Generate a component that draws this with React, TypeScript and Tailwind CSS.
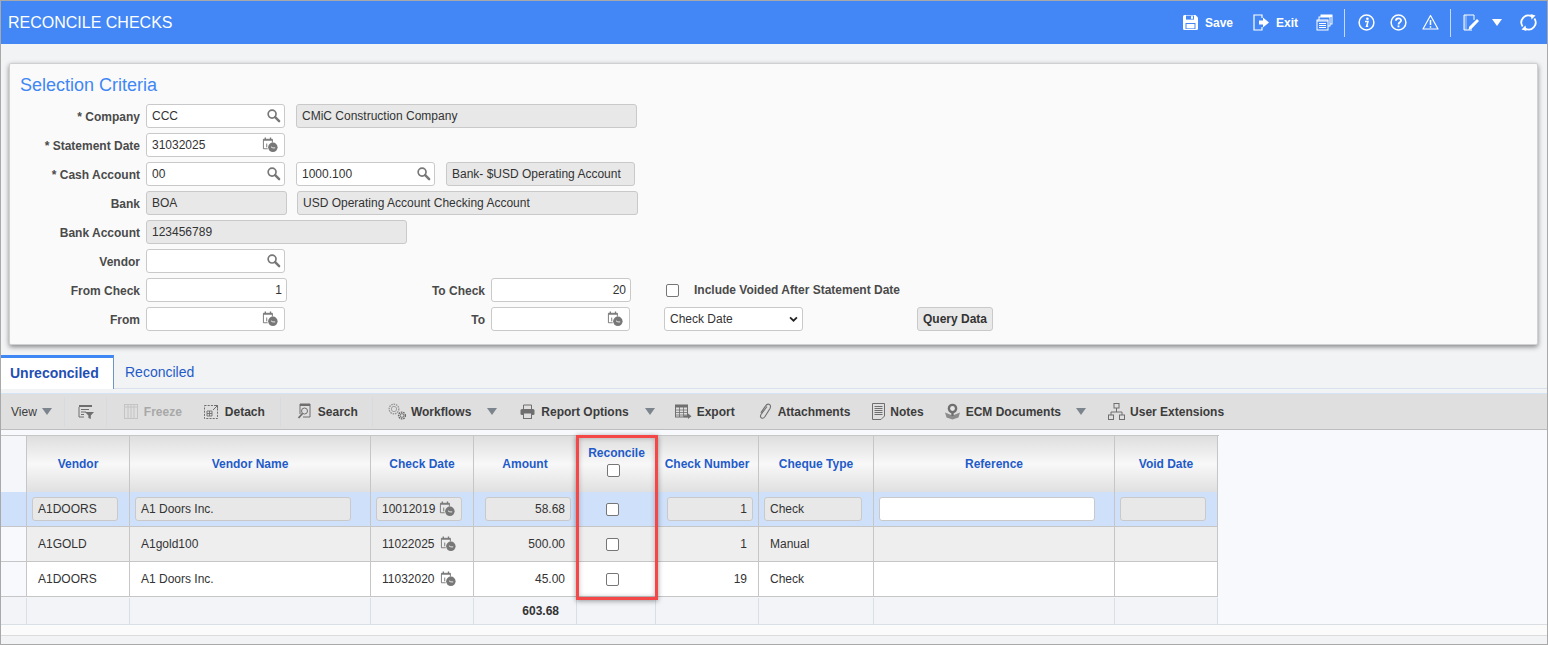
import React from "react";

const font = { fontFamily: '"Liberation Sans", Arial, sans-serif' };

const Search = () => (
  <svg width="15" height="15" viewBox="0 0 16 16" fill="none" className="shrink-0 -translate-y-[1px]">
    <circle cx="6.5" cy="6.5" r="4.2" stroke="#777" strokeWidth="1.8" fill="#fff" />
    <path d="M9.8 9.8 L14 14" stroke="#777" strokeWidth="2.6" strokeLinecap="round" />
  </svg>
);

const Cal = () => (
  <svg width="17" height="17" viewBox="0 0 18 18" fill="none" className="shrink-0 -translate-y-[1px]">
    <path d="M1.5 3.5H11V7M1.5 3.5V13.5H6" stroke="#777" strokeWidth="1" />
    <path d="M1.5 3.5H11V5H1.5Z" fill="#777" />
    <path d="M3.5 1.5V4M9 1.5V4" stroke="#777" strokeWidth="1.4" />
    <path d="M5 8V12" stroke="#777" strokeWidth="1" />
    <circle cx="11.5" cy="12" r="5" fill="#777" />
    <path d="M9.5 11.5L11.5 12.6H14" stroke="#eee" strokeWidth="1" />
  </svg>
);

const Field = ({ w, v, ro, icon, right, cls = "" }: { w: string; v?: string; ro?: boolean; icon?: React.ReactNode; right?: boolean; cls?: string }) => (
  <div className={`h-[24px] ${w} ${cls} shrink-0 rounded-[3px] border border-[#c9c9c9] flex items-center pl-[5px] pr-[3px] text-[12px] text-[#333] ${ro ? "bg-[#e8e8e8]" : "bg-white"} ${right ? "justify-end" : "justify-between"}`}>
    <span className={right ? "pr-[1px]" : ""}>{v}</span>
    {icon}
  </div>
);

const Label = ({ t, w = "w-[141px]" }: { t: string; w?: string }) => (
  <div className={`${w} shrink-0 text-right text-[12px] font-bold text-[#4a4a4a] pt-[1px]`}>{t}</div>
);

const Row = ({ children }: { children: React.ReactNode }) => (
  <div className="flex items-center h-[24px]">{children}</div>
);

const W = "#ffffff";
const SaveI = () => (
  <svg width="17" height="17" viewBox="0 0 17 17" fill="none">
    <path d="M1 2.5 Q1 1 2.5 1 H13.5 L16 3.5 V14.5 Q16 16 14.5 16 H2.5 Q1 16 1 14.5Z" fill={W} />
    <rect x="4" y="1.6" width="8" height="4" fill="#4287f5" />
    <rect x="9" y="2.2" width="2" height="2.6" fill={W} />
    <rect x="3.5" y="9" width="10" height="6" fill="#4287f5" />
    <rect x="4.5" y="10" width="8" height="4.4" fill={W} />
  </svg>
);
const ExitI = () => (
  <svg width="17" height="17" viewBox="0 0 17 17" fill="none">
    <path d="M9 4V1H1V16H9V13" stroke={W} strokeWidth="1.2" />
    <path d="M6 6.5H10V3.5L16 8.5L10 13.5V10.5H6Z" fill={W} />
  </svg>
);
const CopyI = () => (
  <svg width="17" height="17" viewBox="0 0 17 17" fill="none">
    <rect x="5" y="1" width="11" height="9" fill="none" stroke={W} />
    <rect x="5" y="1" width="11" height="2" fill={W} />
    <rect x="3" y="3" width="11" height="9" fill="#4287f5" stroke={W} />
    <rect x="1" y="6" width="11" height="10" fill="#4287f5" stroke={W} />
    <path d="M1 7H12M3 9.5H10M3 11.5H10M3 13.5H10" stroke={W} />
  </svg>
);
const InfoI = () => (
  <svg width="17" height="17" viewBox="0 0 17 17" fill="none">
    <circle cx="8.5" cy="8.5" r="7.4" stroke={W} strokeWidth="1.5" />
    <circle cx="9.4" cy="4.8" r="1.3" fill={W} />
    <path d="M7 7.4H10L8.6 12.2H10.2" stroke={W} strokeWidth="1.5" />
  </svg>
);
const HelpI = () => (
  <svg width="17" height="17" viewBox="0 0 17 17" fill="none">
    <circle cx="8.5" cy="8.5" r="7.4" stroke={W} strokeWidth="1.5" />
    <path d="M5.9 6.7C5.9 3.6 11.1 3.6 11.1 6.5C11.1 8.3 8.5 8.2 8.5 10.4" stroke={W} strokeWidth="1.7" />
    <path d="M8.5 11.4V13.3" stroke={W} strokeWidth="1.8" />
  </svg>
);
const WarnI = () => (
  <svg width="17" height="17" viewBox="0 0 17 17" fill="none">
    <path d="M8.5 1.5L16 15H1Z" stroke={W} strokeWidth="1.2" strokeLinejoin="round" />
    <path d="M8.5 6V11M8.5 12.2V13.8" stroke={W} strokeWidth="1.5" />
  </svg>
);
const EditI = () => (
  <svg width="17" height="17" viewBox="0 0 17 17" fill="none">
    <path d="M11 6V1H1V16H9" stroke={W} strokeWidth="1" />
    <path d="M1 1H4V16H1" fill="#ffffff" fillOpacity="0.3" />
    <path d="M5.5 16L6.2 12.8L14 5L16 7L8.4 15Z" fill={W} />
  </svg>
);
const RefreshI = () => (
  <svg width="17" height="17" viewBox="0 0 17 17" fill="none">
    <path d="M11.5 2.2A7 7 0 0 0 2.6 12.4" stroke={W} strokeWidth="1.8" />
    <path d="M5.5 14.8A7 7 0 0 0 14.4 4.6" stroke={W} strokeWidth="1.8" />
    <path d="M10.5 0L15.5 1.5L11.5 5.5Z" fill={W} />
    <path d="M6.5 17L1.5 15.5L5.5 11.5Z" fill={W} />
  </svg>
);

const G = "#6f6f6f";
const FilterI = () => (
  <svg width="17" height="16" viewBox="0 0 17 16" fill="none">
    <rect x="1" y="1" width="13" height="2" fill={G} />
    <path d="M1 3V13H6M3 5.5H11M3 8H8M3 10.5H6" stroke={G} />
    <path d="M7 8H16L12.8 11.5V15L10.4 14V11.5Z" fill={G} />
  </svg>
);
const FreezeI = () => (
  <svg width="14" height="15" viewBox="0 0 14 15" fill="none" stroke="#c4c4c4">
    <rect x="0.5" y="0.5" width="13" height="14" />
    <path d="M4 1V14M7 1V14M10 1V14M1 3H13" />
  </svg>
);
const DetachI = () => (
  <svg width="15" height="15" viewBox="0 0 15 15" fill="none">
    <rect x="0.5" y="1.5" width="13" height="13" stroke={G} strokeDasharray="2 1.2" />
    <path d="M3 7H8V12H3ZM3 9.5H8M5.5 7V12" stroke={G} strokeWidth="0.9" />
    <path d="M9 6L13 2M10.5 1.5H13.5V4.5" stroke={G} />
  </svg>
);
const SearchDocI = () => (
  <svg width="15" height="17" viewBox="0 0 15 17" fill="none">
    <path d="M3 11V1H13V14H6" stroke={G} />
    <path d="M3 1H13V3H3Z" fill={G} />
    <circle cx="7.5" cy="8" r="3" stroke={G} />
    <path d="M5.5 10.5L1.5 15" stroke={G} strokeWidth="1.8" />
  </svg>
);
const Gear = ({ x, y, r, c }: { x: number; y: number; r: number; c: string }) => (
  <g>
    <circle cx={x} cy={y} r={r} stroke={c} strokeWidth="1.4" strokeDasharray="1.6 0.8" fill="none" />
    <circle cx={x} cy={y} r={r * 0.55} stroke={c} strokeWidth="0.9" fill="none" />
  </g>
);
const WorkflowI = () => (
  <svg width="19" height="17" viewBox="0 0 19 17" fill="none">
    <Gear x={6} y={6} r={4.8} c="#9a9a9a" />
    <Gear x={14} y={12.5} r={3.4} c="#6a6a6a" />
  </svg>
);
const PrintI = () => (
  <svg width="15" height="15" viewBox="0 0 15 15" fill="none">
    <path d="M3.5 5V1H11.5V5" stroke={G} />
    <rect x="0.5" y="5" width="14" height="6" rx="1.5" fill={G} />
    <rect x="3.5" y="9" width="8" height="5.5" fill="#dfdfdf" stroke={G} />
  </svg>
);
const ExportI = () => (
  <svg width="17" height="15" viewBox="0 0 17 15" fill="none">
    <rect x="0.5" y="1" width="12" height="12" stroke={G} />
    <rect x="0.5" y="1" width="12" height="2.5" fill={G} />
    <path d="M0.5 6H12.5M0.5 8.5H12.5M0.5 11H12.5M4.5 3V13M8.5 3V13" stroke={G} strokeWidth="0.8" />
    <path d="M9 11.5H13V9.5L16.5 12.3L13 15V13.2H9Z" fill={G} />
  </svg>
);
const ClipI = () => (
  <svg width="14" height="17" viewBox="0 0 14 17" fill="none">
    <path d="M9 3.5L3 11.5C2 13 2.5 14.5 3.5 15C5 15.8 6 15 7 13.5L12 5.5C13 3.5 12.5 2 11 1.3C9.5 0.7 8.5 1.5 7.5 3L2.8 9.8" stroke={G} strokeWidth="1.1" />
  </svg>
);
const NotesI = () => (
  <svg width="13" height="17" viewBox="0 0 13 17" fill="none">
    <path d="M0.5 0.5H12.5V13L9 16.5H0.5Z" stroke={G} />
    <path d="M2.5 3.5H10.5M2.5 5.5H10.5M2.5 7.5H10.5M2.5 9.5H10.5M2.5 11.5H10.5" stroke={G} />
  </svg>
);
const EcmI = () => (
  <svg width="17" height="17" viewBox="0 0 17 17" fill="none">
    <path d="M1 9.5L8.5 12.5L16 9.5L14.5 14.5L8.5 16.5L2.5 14.5Z" fill="#8c8c8c" />
    <circle cx="8.5" cy="5.5" r="4.8" fill={G} />
    <circle cx="8.5" cy="5.5" r="2.4" fill="#e6e6e6" />
    <path d="M7.3 10H9.7V13H7.3Z" fill={G} />
  </svg>
);
const TreeI = () => (
  <svg width="17" height="17" viewBox="0 0 17 17" fill="none" stroke={G}>
    <rect x="6" y="0.5" width="5" height="4.5" />
    <rect x="0.5" y="12" width="5" height="4.5" />
    <rect x="11.5" y="12" width="5" height="4.5" />
    <path d="M8.5 5V9M3 12V9H14V12" />
  </svg>
);

const Caret = ({ cls = "" }: { cls?: string }) => (
  <span className={`inline-block w-0 h-0 border-l-[5px] border-r-[5px] border-t-[7px] border-l-transparent border-r-transparent border-t-[#7c858d] ${cls}`} />
);

const Sep = ({ cls }: { cls: string }) => <div className={`w-px h-[30px] bg-[#d5dbe0] ${cls}`} />;

const Tool = ({ icon, t, cls, gap = "gap-[6px]", off }: { icon: React.ReactNode; t: string; cls: string; gap?: string; off?: boolean }) => (
  <div className={`flex items-center ${gap} ${cls} text-[12px] font-bold ${off ? "text-[#a8a8a8]" : "text-[#3c3c3c]"}`}>
    {icon}
    <span>{t}</span>
  </div>
);

const cols = "grid-cols-[26px_103px_241px_103px_103px_79px_103px_115px_241px_103px]";
const HCell = ({ t, children }: { t?: string; children?: React.ReactNode }) => (
  <div className="h-[56px] border-r border-[#c6c6c6] bg-gradient-to-b from-[#dedede] via-[#f8f8f8] to-[#e0e0e0] flex flex-col items-center justify-center text-[12px] font-bold text-[#1f5bc9]">
    {t}
    {children}
  </div>
);

const Box = ({ cls = "" }: { cls?: string }) => (
  <input type="checkbox" readOnly className={`w-[13px] h-[13px] m-0 appearance-none rounded-[2px] border border-[#767676] bg-white ${cls}`} />
);

type CellProps = { children?: React.ReactNode; bg: string; right?: boolean; cls?: string };
const Cell = ({ children, bg, right, cls = "" }: CellProps) => (
  <div className={`h-[35px] border-r border-b border-[#c6c6c6] ${bg} flex items-center ${right ? "justify-end" : ""} text-[12px] text-[#333] ${cls}`}>
    {children}
  </div>
);

const InCell = ({ w, v, right, white, ml = "ml-[5px]" }: { w: string; v?: string; right?: boolean; white?: boolean; ml?: string }) => (
  <div className={`${w} h-[24px] ${ml} rounded-[3px] border border-[#c9c9c9] flex items-center px-[5px] ${white ? "bg-white" : "bg-[#e8e8e8]"} ${right ? "justify-end" : ""}`}>{v}</div>
);

const Foot = ({ children, right }: { children?: React.ReactNode; right?: boolean }) => (
  <div className={`h-[26px] border-r border-[#d8dfe6] bg-[#f2f4f8] flex items-center ${right ? "justify-end pr-[17px]" : ""} text-[12px] font-bold text-[#333]`}>{children}</div>
);

const rows = [
  { bg: "bg-[#cfe0fb]", v: "A1DOORS", n: "A1 Doors Inc.", d: "10012019", a: "58.68", c: "1", t: "Check", edit: true },
  { bg: "bg-[#eeeeee]", v: "A1GOLD", n: "A1gold100", d: "11022025", a: "500.00", c: "1", t: "Manual" },
  { bg: "bg-white", v: "A1DOORS", n: "A1 Doors Inc.", d: "11032020", a: "45.00", c: "19", t: "Check" },
];

export default function App() {
  return (
    <div style={font} className="relative w-[1548px] h-[645px] overflow-hidden bg-[#f2f3f5] border border-[#a9a9a9]">
      {/* Title bar */}
      <div className="h-[43px] bg-[#4287f5] flex items-center text-white">
        <div className="ml-[7px] text-[16px]">RECONCILE CHECKS</div>
        <div className="ml-auto flex items-center text-[12px] font-bold">
          <div className="flex items-center gap-[6px]"><SaveI /><span>Save</span></div>
          <div className="flex items-center gap-[6px] ml-[20px]"><ExitI /><span>Exit</span></div>
          <div className="ml-[18px]"><CopyI /></div>
          <div className="w-px h-[28px] bg-[#c5d9f8] ml-[11px]" />
          <div className="ml-[13px]"><InfoI /></div>
          <div className="ml-[15px]"><HelpI /></div>
          <div className="ml-[15px]"><WarnI /></div>
          <div className="w-px h-[28px] bg-[#c5d9f8] ml-[11px]" />
          <div className="ml-[12px]"><EditI /></div>
          <span className="inline-block ml-[12px] w-0 h-0 border-l-[5px] border-r-[5px] border-t-[7px] border-l-transparent border-r-transparent border-t-white" />
          <div className="ml-[18px] mr-[10px]"><RefreshI /></div>
        </div>
      </div>

      {/* Selection panel */}
      <div className="mt-[19px] ml-[8px] w-[1529px] h-[282px] bg-[#fafafa] border border-[#d0d0d0] rounded-[2px] shadow-[0_2px_5px_rgba(0,0,0,0.45)] pt-[11px]">
        <div className="ml-[10px] text-[18px] leading-[21px] text-[#3f87f5]">Selection Criteria</div>
        <div className="mt-[8px] flex flex-col gap-[5px] text-[12px]">
          <Row>
            <Label t="* Company" w="w-[130px]" /><div className="w-[6px]" />
            <Field w="w-[139px]" v="CCC" icon={<Search />} />
            <Field w="w-[341px]" cls="ml-[11px]" v="CMiC Construction Company" ro />
          </Row>
          <Row>
            <Label t="* Statement Date" w="w-[130px]" /><div className="w-[6px]" />
            <Field w="w-[139px]" v="31032025" icon={<span className="pr-[2px] flex"><Cal /></span>} />
          </Row>
          <Row>
            <Label t="* Cash Account" w="w-[130px]" /><div className="w-[6px]" />
            <Field w="w-[139px]" v="00" icon={<Search />} />
            <Field w="w-[139px]" cls="ml-[11px]" v="1000.100" icon={<Search />} />
            <Field w="w-[189px]" cls="ml-[11px]" v="Bank- $USD Operating Account" ro />
          </Row>
          <Row>
            <Label t="Bank" w="w-[130px]" /><div className="w-[6px]" />
            <Field w="w-[141px]" v="BOA" ro />
            <Field w="w-[341px]" cls="ml-[10px]" v="USD Operating Account Checking Account" ro />
          </Row>
          <Row>
            <Label t="Bank Account" w="w-[130px]" /><div className="w-[6px]" />
            <Field w="w-[261px]" v="123456789" ro />
          </Row>
          <Row>
            <Label t="Vendor" w="w-[130px]" /><div className="w-[6px]" />
            <Field w="w-[139px]" icon={<Search />} />
          </Row>
          <Row>
            <Label t="From Check" w="w-[130px]" /><div className="w-[6px]" />
            <Field w="w-[141px]" v="1" right />
            <Label t="To Check" w="w-[198px]" /><div className="w-[6px]" />
            <Field w="w-[140px]" v="20" right />
            <Box cls="ml-[35px]" />
            <span className="ml-[15px] font-bold text-[#4a4a4a]">Include Voided After Statement Date</span>
          </Row>
          <Row>
            <Label t="From" w="w-[130px]" /><div className="w-[6px]" />
            <Field w="w-[139px]" icon={<span className="pr-[2px] flex"><Cal /></span>} />
            <Label t="To" w="w-[200px]" /><div className="w-[6px]" />
            <Field w="w-[139px]" icon={<span className="pr-[2px] flex"><Cal /></span>} />
            <div className="ml-[34px] w-[139px] h-[24px] rounded-[3px] border border-[#c9c9c9] bg-white flex items-center justify-between pl-[5px] pr-[4px] text-[#333]">
              <span>Check Date</span>
              <svg width="9" height="6" viewBox="0 0 10 7" fill="none"><path d="M1 1.5L5 5.5L9 1.5" stroke="#222" strokeWidth="2" /></svg>
            </div>
            <div className="ml-[114px] w-[76px] h-[24px] rounded-[3px] border border-[#c9c9c9] bg-[#e9e9e9] flex items-center justify-center font-bold text-[#333]">Query Data</div>
          </Row>
        </div>
      </div>

      {/* Tabs */}
      <div className="mt-[10px] h-[34px] flex border-b border-[#d9e2ec] text-[14px]">
        <div className="w-[113px] bg-white border-t-[3px] border-t-[#3f87f5] border-r border-r-[#6f95c6] -mb-px pl-[9px] flex items-center font-bold text-[#1f4fb5]">Unreconciled</div>
        <div className="pl-[11px] pt-[1px] flex items-center text-[#1f5bc9]">Reconciled</div>
      </div>

      {/* Toolbar */}
      <div className="mt-[4px] h-[37px] bg-[#dfdfdf] border-t border-t-[#d4e3f5] border-b border-b-[#bdbdbd] flex items-center">
        <span className="ml-[10px] text-[12px] text-[#3c3c3c]">View</span>
        <Caret cls="ml-[5px]" />
        <Sep cls="ml-[12px]" />
        <div className="ml-[13px]"><FilterI /></div>
        <Sep cls="ml-[11px]" />
        <Tool cls="ml-[17px]" icon={<FreezeI />} t="Freeze" off />
        <Tool cls="ml-[22px]" icon={<DetachI />} t="Detach" />
        <Sep cls="ml-[15px]" />
        <Tool cls="ml-[16px]" icon={<SearchDocI />} t="Search" />
        <Sep cls="ml-[14px]" />
        <Tool cls="ml-[15px]" gap="gap-[4px]" icon={<WorkflowI />} t="Workflows" />
        <Caret cls="ml-[16px]" />
        <Tool cls="ml-[23px]" icon={<PrintI />} t="Report Options" />
        <Caret cls="ml-[16px]" />
        <Tool cls="ml-[20px]" gap="gap-[5px]" icon={<ExportI />} t="Export" />
        <Tool cls="ml-[23px]" icon={<ClipI />} t="Attachments" />
        <Tool cls="ml-[22px]" gap="gap-[5px]" icon={<NotesI />} t="Notes" />
        <Tool cls="ml-[20px]" gap="gap-[5px]" icon={<EcmI />} t="ECM Documents" />
        <Caret cls="ml-[15px]" />
        <Tool cls="ml-[22px]" gap="gap-[5px]" icon={<TreeI />} t="User Extensions" />
      </div>

      {/* Grid area */}
      <div className="h-[195px] bg-[#f8f9fd] border-b border-[#d9dee3] pt-[5px]">
        <div className={`grid ${cols} w-[1218px] border-t border-t-[#c6c6c6]`}>
          <div className="h-[56px] border-r border-[#c6c6c6] bg-[#f4f6fa]" />
          <HCell t="Vendor" />
          <HCell t="Vendor Name" />
          <HCell t="Check Date" />
          <HCell t="Amount" />
          <HCell>
            <div className="flex flex-col items-center pb-[8px]">
              <span className="ml-[1px]">Reconcile</span>
              <Box cls="mt-[2px] -ml-[4px]" />
            </div>
          </HCell>
          <HCell t="Check Number" />
          <HCell t="Cheque Type" />
          <HCell t="Reference" />
          <HCell t="Void Date" />

          {rows.map((r, i) => (
            <React.Fragment key={i}>
              <div className={`h-[35px] border-r border-b border-[#c6c6c6] ${r.edit ? r.bg : "bg-[#f8f9fd]"}`} />
              {r.edit ? (
                <>
                  <Cell bg={r.bg}><InCell w="w-[86px]" v={r.v} /></Cell>
                  <Cell bg={r.bg}><InCell w="w-[216px]" v={r.n} /></Cell>
                  <Cell bg={r.bg}>
                    <div className="w-[86px] h-[24px] ml-[5px] rounded-[3px] border border-[#c9c9c9] bg-[#e8e8e8] flex items-center justify-between pl-[5px] pr-[5px]">{r.d}<Cal /></div>
                  </Cell>
                  <Cell bg={r.bg}><InCell w="w-[86px]" ml="ml-[11px]" v={r.a} right /></Cell>
                </>
              ) : (
                <>
                  <Cell bg={r.bg} cls="pl-[11px]">{r.v}</Cell>
                  <Cell bg={r.bg} cls="pl-[11px]">{r.n}</Cell>
                  <Cell bg={r.bg} cls="pl-[11px] gap-[5px]">{r.d}<Cal /></Cell>
                  <Cell bg={r.bg} right cls="pr-[11px]">{r.a}</Cell>
                </>
              )}
              <Cell bg={r.bg} cls="pl-[29px]"><Box /></Cell>
              {r.edit ? (
                <>
                  <Cell bg={r.bg}><InCell w="w-[86px]" ml="ml-[11px]" v={r.c} right /></Cell>
                  <Cell bg={r.bg}><InCell w="w-[98px]" v={r.t} /></Cell>
                  <Cell bg={r.bg}><InCell w="w-[216px]" white /></Cell>
                  <Cell bg={r.bg}><InCell w="w-[86px]" /></Cell>
                </>
              ) : (
                <>
                  <Cell bg={r.bg} right cls="pr-[11px]">{r.c}</Cell>
                  <Cell bg={r.bg} cls="pl-[11px]">{r.t}</Cell>
                  <Cell bg={r.bg} />
                  <Cell bg={r.bg} />
                </>
              )}
            </React.Fragment>
          ))}

          <div className="col-span-10 h-px bg-[#f2f4f8]" />
          <Foot /><Foot /><Foot /><Foot />
          <Foot right>603.68</Foot>
          <Foot /><Foot /><Foot /><Foot /><Foot />
        </div>
        <div className="w-[1218px] h-[1px] bg-[#d8dfe6]" />
      </div>
      <div className="h-[11px] bg-[#fbfbfb] border-b border-[#dcdcdc]" />

      {/* Callout */}
      <div className="absolute left-[575px] top-[434px] w-[82px] h-[165px] border-[3px] border-[#f44848] shadow-[0_1px_5px_rgba(0,0,0,0.4),inset_0_0_5px_rgba(0,0,0,0.25)] pointer-events-none" />
    </div>
  );
}
